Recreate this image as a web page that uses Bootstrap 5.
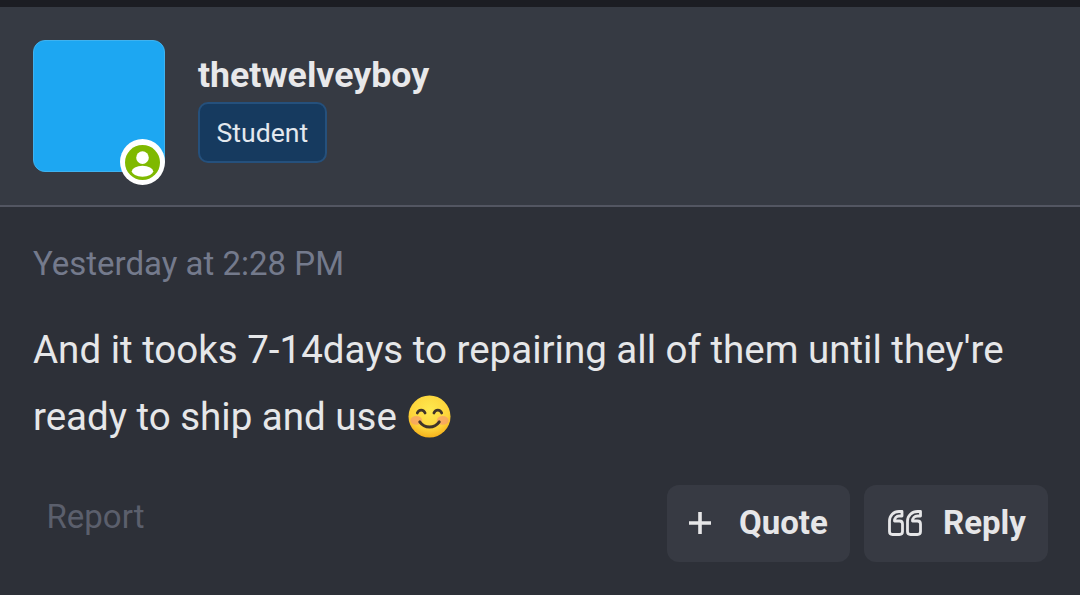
<!DOCTYPE html>
<html lang="en">
<head>
<meta charset="utf-8">
<title>Post</title>
<link rel="stylesheet" href="https://cdn.jsdelivr.net/npm/bootstrap@5.3.0/dist/css/bootstrap.min.css">
<style>
html,body{height:595px;overflow:hidden}
body{background:#2d3038;font-family:Roboto,"Liberation Sans",sans-serif;color:#e9eaec}
.topstrip{height:7px;background:#1c1d23}
.userbar{height:200px;background:#363a43;border-bottom:2px solid #535662;padding:33px 33px 0}
.avatarbox{width:132px;height:132px;border-radius:12px;background:#1da7f2;border:1px solid #3fb2ef;flex:none}
.statusdot{position:absolute;right:-1px;bottom:-14px;width:45px;height:46px;border-radius:50%;background:#fff;display:flex;align-items:center;justify-content:center}
.uname{font-weight:700;font-size:35.7px;line-height:40px;margin-top:15px;color:#e8e8ea}
.rolechip{display:inline-block;margin-top:7px;height:61px;padding:0 16.5px;line-height:58px;font-size:26.6px;color:#e3e8ee;background:#163a5f;border:2px solid #25507c;border-radius:10px}
.infocol{margin-left:33px}
.postbody{padding:0 33px}
.stamp{font-size:33px;line-height:40px;color:#747a8c;margin-top:37px}
.msg{font-size:38.5px;line-height:67px;color:#e6e7e9;margin-top:32px}
.emo{display:inline-block;width:43px;height:43px;vertical-align:-8px;margin-left:2px}
.foot{margin-top:35px}
.rep{font-size:33px;line-height:40px;color:#5b5f6c;margin-left:13.5px;margin-top:12px}
.actbtn{height:77px;background:#373a43;color:#e6e6e8;border:0;border-radius:12px;font-weight:700;font-size:33px;display:flex;align-items:center;padding-bottom:2px}
.actq{width:183px;padding-left:21px}
.actr{width:184px;padding-left:24px;margin-left:14px}
.actq svg{margin-right:27px}
.actr svg{margin-right:21px}
.footr{margin-right:-1px}
</style>
</head>
<body>
<div class="topstrip"></div>
<div class="userbar d-flex">
  <div class="avatarbox position-relative">
    <div class="statusdot">
      <svg width="35" height="35" viewBox="0 0 36 36"><circle cx="18" cy="18" r="18" fill="#7fb900"/><circle cx="18" cy="13" r="6.5" fill="#fff"/><ellipse cx="18" cy="27" rx="11" ry="5.6" fill="#fff"/></svg>
    </div>
  </div>
  <div class="infocol">
    <div class="uname">thetwelveyboy</div>
    <div class="rolechip">Student</div>
  </div>
</div>
<div class="postbody">
  <div class="stamp">Yesterday at 2:28 PM</div>
  <div class="msg">And it tooks 7-14days to repairing all of them until they're<br>ready to ship and use <svg class="emo" viewBox="0 0 44 44"><defs><radialGradient id="g" cx="50%" cy="35%" r="65%"><stop offset="0" stop-color="#fee94f"/><stop offset=".7" stop-color="#fdd33a"/><stop offset="1" stop-color="#f6b21c"/></radialGradient></defs><circle cx="22" cy="22" r="21.5" fill="url(#g)"/><ellipse cx="8.5" cy="26" rx="6" ry="4.5" fill="#f59a6c" opacity=".7"/><ellipse cx="35.5" cy="26" rx="6" ry="4.5" fill="#f59a6c" opacity=".7"/><path d="M9.5 18.5c1.5-4 6.5-4 8 0M26.5 18.5c1.5-4 6.5-4 8 0" fill="none" stroke="#40352a" stroke-width="2.8" stroke-linecap="round"/><path d="M12 27.5c5 7 15 7 20 0" fill="none" stroke="#40352a" stroke-width="3" stroke-linecap="round"/></svg></div>
  <div class="foot d-flex justify-content-between align-items-start">
    <div class="rep">Report</div>
    <div class="d-flex footr">
      <button class="actbtn actq"><svg width="24" height="24" viewBox="0 0 24 24"><path d="M12 1v22M1 12h22" stroke="#e6e6e8" stroke-width="3.6" fill="none"/></svg>Quote</button>
      <button class="actbtn actr"><svg width="34" height="26" viewBox="0 0 34 26" fill="none" stroke="#e6e6e8" stroke-width="2.8" stroke-linejoin="round"><path d="M14 1.5H11C5.500 1.500 1.500 5.500 1.500 11v10.500q0 3 3 3h7q3 0 3-3V14q0-3-3-3H6.500C6.500 8 8.500 6 11 6h3z"/><path d="M32.500 1.500H29.500C24 1.500 19.500 5.500 19.500 11v10.500q0 3 3 3h7q3 0 3-3V14q0-3-3-3H24.500C24.500 8 26.500 6 29.500 6h3z"/></svg>Reply</button>
    </div>
  </div>
</div>
<script src="https://cdn.jsdelivr.net/npm/bootstrap@5.3.0/dist/js/bootstrap.bundle.min.js"></script>
</body>
</html>
